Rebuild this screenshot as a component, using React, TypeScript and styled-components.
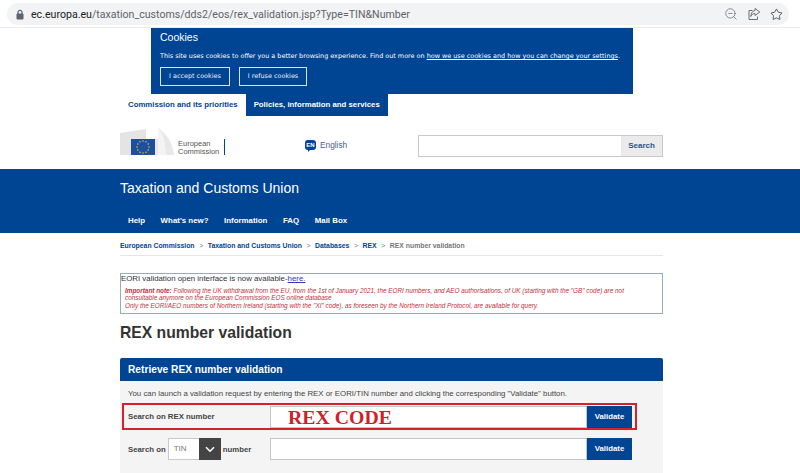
import React from 'react';
import styled, { createGlobalStyle } from 'styled-components';
import { ZoomOut, Star } from 'lucide-react';

const Global = createGlobalStyle`
  html, body { margin: 0; padding: 0; background: #fff; overflow: hidden; }
  body { font-family: "Liberation Sans", Arial, sans-serif; }
  * { box-sizing: border-box; }
`;
const Page = styled.div`width: 800px; height: 473px; overflow: hidden; display: flex; flex-direction: column;`;
const BrowserBar = styled.div`height: 28px; padding: 3px 11px 2px 7px; border-bottom: 1px solid #e8eaed; flex: none;`;
const Omnibox = styled.div`height: 22px; border-radius: 11px; background: #f1f3f4; display: flex; align-items: center; padding: 0 6px 0 8px;`;
const Url = styled.div`margin-left: 6px; font: 10.6px Roboto, sans-serif; color: #5f6368; flex: 1; white-space: nowrap; b { font-weight: 400; color: #202124; }`;
const BarIcons = styled.div`display: flex; align-items: center; gap: 9px; color: #5f6368;`;
const Cookie = styled.section`margin-left: 151px; width: 482px; height: 66px; background: #004494; color: #fff; padding: 3px 9px; flex: none;`;
const CookieTitle = styled.div`font: 10.5px/12px "Liberation Sans", sans-serif;`;
const CookieText = styled.div`font: 6.45px/10px "DejaVu Sans", sans-serif; margin-top: 8px; white-space: nowrap; a { color: #fff; text-decoration: underline; }`;
const CookieButtons = styled.div`display: flex; gap: 9px; margin-top: 6px;`;
const CookieButton = styled.div`height: 19px; border: 1px solid #d6e4f3; padding: 0 8px; font: 6.45px/17px "DejaVu Sans", sans-serif; color: #e9f0f8; white-space: nowrap;`;
const Tabs = styled.nav`display: flex; height: 22px; padding-left: 120px; flex: none; font-size: 7.8px; font-weight: 700;`;
const Tab = styled.div<{ $active?: boolean }>`
  padding: 0 8px; line-height: 21px; white-space: nowrap;
  background: ${p => (p.$active ? '#004494' : 'transparent')};
  color: ${p => (p.$active ? '#fff' : '#004494')};
`;
const Masthead = styled.div`height: 53px; padding: 12px 137px 0 120px; display: flex; align-items: flex-start; flex: none;`;
const Logo = styled.div`width: 105px; height: 27px; display: flex; align-items: flex-end; position: relative;`;
const LogoText = styled.div`position: absolute; left: 58px; top: 12px; font: 7.5px/8.3px "Liberation Sans", sans-serif; color: #555;`;
const LogoRule = styled.div`position: absolute; left: 104px; top: 11px; width: 1px; height: 16px; background: #004494;`;
const Language = styled.div`margin: 12px 0 0 80px; width: 113px; display: flex; align-items: center; gap: 4px; font-size: 8.3px; color: #47658f;`;
const LangBadge = styled.span`width: 11px; height: 10px; border-radius: 3px; background: #004494; color: #fff; font: 700 6px/10px "Liberation Sans", sans-serif; text-align: center; position: relative;
  &::after { content: ""; position: absolute; left: 3px; bottom: -2px; border: 1.5px solid transparent; border-top-color: #004494; border-left-color: #004494; }`;
const SiteSearch = styled.div`width: 245px; height: 22px; margin-top: 7px; border: 1px solid #c9c9c9; display: flex; background: #fff;`;
const SearchField = styled.div`flex: 1;`;
const SearchButton = styled.div`width: 41px; background: #ebebeb; color: #2c5488; font-size: 8px; font-weight: 700; line-height: 20px; text-align: center;`;
const Band = styled.header`height: 64px; background: #004494; color: #fff; padding: 12px 120px 0; flex: none;`;
const SiteTitle = styled.div`font-size: 14px; line-height: 15px; white-space: nowrap;`;
const MainNav = styled.nav`display: flex; gap: 15.5px; margin: 19px 0 0 8px; font-size: 7.9px; font-weight: 700; line-height: 12px;`;
const Content = styled.main`padding: 0 137px 0 120px; flex: 1;`;
const Breadcrumb = styled.div`height: 23px; border-bottom: 1px solid #e6e6e6; font-size: 6.85px; font-weight: 700; line-height: 25px; color: #004494; display: flex; gap: 4.6px; white-space: nowrap;`;
const Crumb = styled.span`color: #777;`;
const Sep = styled.span`color: #777; font-weight: 400;`;
const Notice = styled.div`margin-top: 17px; height: 41px; border: 1px solid #8fb0bb;`;
const NoticeLead = styled.div`font-size: 7.85px; line-height: 10px; color: #333; a { color: #3333cc; text-decoration: underline; }`;
const NoticeNote = styled.div`margin: 3px 0 0 4px; font-size: 6.38px; line-height: 7.4px; font-style: italic; color: #c42f3c; b { font-weight: 700; }`;
const Title = styled.h1`margin: 9px 0 0; font-size: 15.7px; line-height: 20px; font-weight: 700; color: #333;`;
const Panel = styled.section`margin-top: 15px; background: #f4f4f4; height: 130px; border-radius: 2px 2px 0 0;`;
const PanelHead = styled.div`height: 23px; background: #004494; color: #fff; padding-left: 8px; font-size: 10.2px; font-weight: 700; line-height: 23px; border-radius: 2px 2px 0 0;`;
const Intro = styled.div`padding: 8px 0 0 8px; font-size: 7.83px; line-height: 10px; color: #444; white-space: nowrap;`;
const Form = styled.div`display: flex; flex-direction: column; gap: 8px; margin-top: 4px; padding-left: 2px;`;
const Row = styled.div<{ $marked?: boolean }>`
  width: 515px; height: ${p => (p.$marked ? '27px' : '22px')}; display: flex; align-items: center; padding-left: ${p => (p.$marked ? '4px' : '6px')};
  border: ${p => (p.$marked ? '2px solid #d8202c' : '0')};
  font-size: 7.8px; font-weight: 700; color: #444; white-space: nowrap;
`;
const Label = styled.div`width: 142px; flex: none;`;
const SearchOn = styled.div`width: 142px; flex: none; display: flex; align-items: center; gap: 2px;`;
const Select = styled.div`width: 53px; height: 22px; display: flex; background: #fff; border: 1px solid #c9c9c9; font-weight: 400; color: #777; font-size: 8px; line-height: 20px; padding-left: 5px; justify-content: space-between;`;
const SelectArrow = styled.span`width: 22px; height: 22px; margin: -1px -1px 0 0; background: #444; display: flex; align-items: center; justify-content: center;`;
const Field = styled.div`width: 317px; height: 22px; background: #fff; border: 1px solid #c4c4c4; flex: none; display: flex; align-items: center; padding-left: 17px;`;
const Marker = styled.span`font: 700 19.8px/20px "Liberation Serif", serif; color: #cf1f2a;`;
const Validate = styled.div`width: 45px; height: 22px; background: #004494; color: #fff; font-size: 7.8px; font-weight: 700; line-height: 21px; text-align: center; flex: none;`;

function Lock() {
  return (
    <svg width="10" height="11" viewBox="0 0 10 11" aria-hidden="true">
      <rect x="1.5" y="4.5" width="7" height="6" rx="1" fill="#5f6368" />
      <path d="M3 5V3.3a2 2 0 0 1 4 0V5" fill="none" stroke="#5f6368" strokeWidth="1.2" />
    </svg>
  );
}
function ShareIcon() {
  return (
    <svg width="14" height="14" viewBox="0 0 14 14" fill="none" stroke="#6b6f73" strokeWidth="1" aria-hidden="true">
      <path d="M5.5 3.5H2v9h8.5V9.5" />
      <path d="M8 1.5 12.8 5 8 8.5V6.5C6 6.5 4.5 7.5 3.8 9.5 4 6.5 5.5 3.7 8 3.5Z" strokeLinejoin="round" />
    </svg>
  );
}
function EuEmblem() {
  const stars = Array.from({ length: 12 }, (_, i) => {
    const a = (i * Math.PI) / 6;
    return <circle key={i} cx={23 + 6 * Math.cos(a)} cy={19 + 6 * Math.sin(a)} r="0.7" fill="#ffd617" />;
  });
  return (
    <svg width="58" height="27" viewBox="0 0 58 27" aria-hidden="true">
      <path d="M0 5 L26 1 L26 27 L0 27Z" fill="#e4e4e4" />
      <path d="M38 0 C46 6 52 12 54 27 L35 27 L35 11 L38 11Z" fill="#e8e8e8" />
      <path d="M38 0 C43 5 45 12 46 27 L38 27Z" fill="#f4f4f4" />
      <rect x="11" y="11" width="24" height="16" fill="#1d4f9c" />
      {stars}
    </svg>
  );
}

export default function App() {
  return (
    <Page>
      <Global />
      <BrowserBar>
        <Omnibox>
          <Lock />
          <Url><b>ec.europa.eu</b>/taxation_customs/dds2/eos/rex_validation.jsp?Type=TIN&amp;Number</Url>
          <BarIcons>
            <ZoomOut size={14} strokeWidth={1.2} />
            <ShareIcon />
            <Star size={13} strokeWidth={1.6} color="#444" />
          </BarIcons>
        </Omnibox>
      </BrowserBar>
      <Cookie>
        <CookieTitle>Cookies</CookieTitle>
        <CookieText>This site uses cookies to offer you a better browsing experience. Find out more on <a>how we use cookies and how you can change your settings</a>.</CookieText>
        <CookieButtons>
          <CookieButton>I accept cookies</CookieButton>
          <CookieButton>I refuse cookies</CookieButton>
        </CookieButtons>
      </Cookie>
      <Tabs>
        <Tab>Commission and its priorities</Tab>
        <Tab $active>Policies, information and services</Tab>
      </Tabs>
      <Masthead>
        <Logo>
          <EuEmblem />
          <LogoText>European<br />Commission</LogoText>
          <LogoRule />
        </Logo>
        <Language><LangBadge>EN</LangBadge>English</Language>
        <SiteSearch>
          <SearchField />
          <SearchButton>Search</SearchButton>
        </SiteSearch>
      </Masthead>
      <Band>
        <SiteTitle>Taxation and Customs Union</SiteTitle>
        <MainNav>
          <span>Help</span><span>What's new?</span><span>Information</span><span>FAQ</span><span>Mail Box</span>
        </MainNav>
      </Band>
      <Content>
        <Breadcrumb>
          <span>European Commission</span><Sep>&gt;</Sep>
          <span>Taxation and Customs Union</span><Sep>&gt;</Sep>
          <span>Databases</span><Sep>&gt;</Sep>
          <span>REX</span><Sep>&gt;</Sep>
          <Crumb>REX number validation</Crumb>
        </Breadcrumb>
        <Notice>
          <NoticeLead>EORI validation open interface is now available-<a>here.</a></NoticeLead>
          <NoticeNote>
            <b>Important note:</b> Following the UK withdrawal from the EU, from the 1st of January 2021, the EORI numbers, and AEO authorisations, of UK (starting with the "GB" code) are not<br />
            consultable anymore on the European Commission EOS online database<br />
            Only the EORI/AEO numbers of Northern Ireland (starting with the "XI" code), as foreseen by the Northern Ireland Protocol, are available for query.
          </NoticeNote>
        </Notice>
        <Title>REX number validation</Title>
        <Panel>
          <PanelHead>Retrieve REX number validation</PanelHead>
          <Intro>You can launch a validation request by entering the REX or EORI/TIN number and clicking the corresponding "Validate" button.</Intro>
          <Form>
            <Row $marked>
              <Label>Search on REX number</Label>
              <Field><Marker>REX CODE</Marker></Field>
              <Validate>Validate</Validate>
            </Row>
            <Row>
              <SearchOn>
                Search on
                <Select>TIN<SelectArrow>
                  <svg width="10" height="7" viewBox="0 0 10 7" aria-hidden="true"><path d="M1 1.2 5 5.2 9 1.2" fill="none" stroke="#fff" strokeWidth="1.6" /></svg>
                </SelectArrow></Select>
                number
              </SearchOn>
              <Field />
              <Validate>Validate</Validate>
            </Row>
          </Form>
        </Panel>
      </Content>
    </Page>
  );
}
